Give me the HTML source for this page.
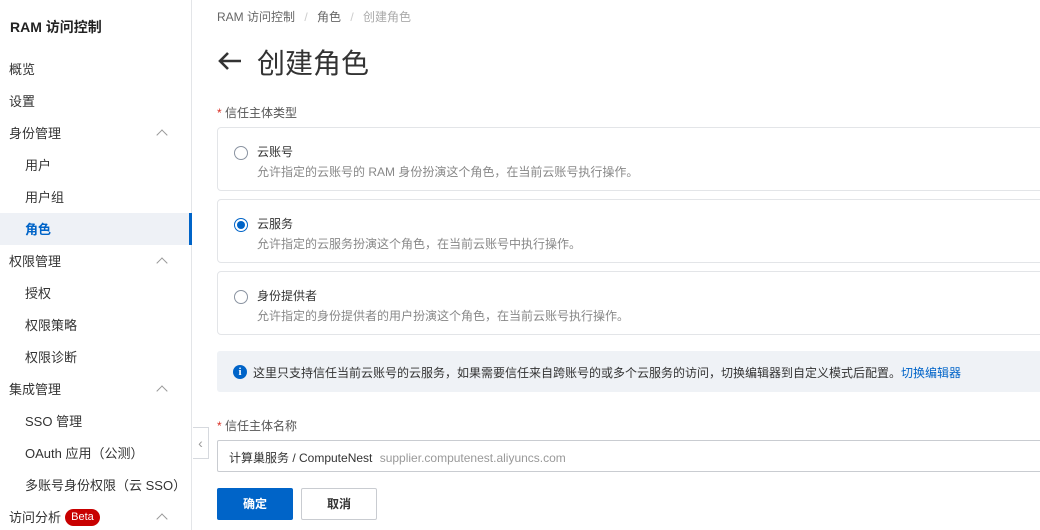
<!DOCTYPE html>
<html><head><meta charset="utf-8"><style>
*{margin:0;padding:0;box-sizing:border-box}
body{width:1040px;height:530px;overflow:hidden;background:#fff;font-family:"Liberation Sans","Noto Sans CJK SC",sans-serif;color:#333;position:relative}
.side{position:absolute;left:0;top:0;width:192px;height:530px;border-right:1px solid #e3e5e8}
.abs{position:absolute;white-space:nowrap}
.t{font-size:13px;color:#333}
.title{font-size:14px;font-weight:bold;color:#222}
.chev{position:absolute;left:158px;width:8px;height:8px;border-left:1.3px solid #999;border-top:1.3px solid #999;transform:rotate(45deg)}
.card{position:absolute;left:217px;width:840px;height:64px;border:1px solid #e3e5e8;border-radius:4px}
.radio{position:absolute;left:16px;top:18px;width:14px;height:14px;border:1px solid #8a93a1;border-radius:50%}
.card .h{position:absolute;left:39px;top:15px;font-size:12px;color:#333}
.card .d{position:absolute;left:39px;top:35px;font-size:12px;color:#888}
</style></head><body>
<div class="side">
<div class="abs title" style="left:10px;top:17px">RAM 访问控制</div>
<div class="abs t" style="left:9px;top:59px">概览</div>
<div class="abs t" style="left:9px;top:91px">设置</div>
<div class="abs t" style="left:9px;top:123px">身份管理</div><div class="chev" style="top:131px"></div>
<div class="abs t" style="left:25px;top:155px">用户</div>
<div class="abs t" style="left:25px;top:187px">用户组</div>
<div class="abs" style="left:0;top:213px;width:192px;height:32px;background:#eef1f6;border-right:3px solid #0064c8"></div>
<div class="abs t" style="left:25px;top:219px;color:#0064c8;font-weight:bold">角色</div>
<div class="abs t" style="left:9px;top:251px">权限管理</div><div class="chev" style="top:259px"></div>
<div class="abs t" style="left:25px;top:283px">授权</div>
<div class="abs t" style="left:25px;top:315px">权限策略</div>
<div class="abs t" style="left:25px;top:347px">权限诊断</div>
<div class="abs t" style="left:9px;top:379px">集成管理</div><div class="chev" style="top:387px"></div>
<div class="abs t" style="left:25px;top:411px">SSO 管理</div>
<div class="abs t" style="left:25px;top:443px">OAuth 应用（公测）</div>
<div class="abs t" style="left:25px;top:475px">多账号身份权限（云 SSO）</div>
<div class="abs t" style="left:9px;top:507px">访问分析</div>
<div class="abs" style="left:65px;top:509px;width:35px;height:17px;background:#c80000;border-radius:9px;color:#fff;font-size:11px;text-align:center;line-height:17px">Beta</div>
<div class="chev" style="top:515px"></div>
</div>
<div class="abs" style="left:193px;top:427px;width:16px;height:32px;border:1px solid #d6d9de;border-left:none;background:#fff;color:#999;font-size:14px;text-align:center;line-height:30px">‹</div>
<div class="abs" style="left:217px;top:8px;font-size:12px;color:#666">RAM 访问控制 <span style="color:#ccc;margin:0 6px">/</span> 角色 <span style="color:#ccc;margin:0 6px">/</span> <span style="color:#aaa">创建角色</span></div>
<svg class="abs" style="left:217px;top:50px" width="26" height="22" viewBox="0 0 26 22"><path d="M24 11H3M11 3L3 11L11 19" stroke="#333" stroke-width="2.6" fill="none"/></svg>
<div class="abs" style="left:257px;top:42px;font-size:28px;color:#333">创建角色</div>
<div class="abs" style="left:217px;top:104px;font-size:12px;color:#555"><span style="color:#d93026">*</span> 信任主体类型</div>
<div class="card" style="top:127px"><div class="radio"></div><div class="h">云账号</div><div class="d">允许指定的云账号的 RAM 身份扮演这个角色，在当前云账号执行操作。</div></div>
<div class="card" style="top:199px"><div class="radio" style="border-color:#0064c8"><div style="margin:2px;width:8px;height:8px;border-radius:50%;background:#0064c8"></div></div><div class="h">云服务</div><div class="d">允许指定的云服务扮演这个角色，在当前云账号中执行操作。</div></div>
<div class="card" style="top:271px"><div class="radio"></div><div class="h">身份提供者</div><div class="d">允许指定的身份提供者的用户扮演这个角色，在当前云账号执行操作。</div></div>
<div class="abs" style="left:217px;top:351px;width:840px;height:41px;background:#eff2f6;border-radius:3px"></div>
<div class="abs" style="left:233px;top:365px;width:14px;height:14px;border-radius:50%;background:#0064c8;color:#fff;font-size:11px;font-weight:bold;text-align:center;line-height:14px;font-family:'Liberation Serif',serif">i</div>
<div class="abs" style="left:253px;top:364px;font-size:12px;color:#333">这里只支持信任当前云账号的云服务，如果需要信任来自跨账号的或多个云服务的访问，切换编辑器到自定义模式后配置。<span style="color:#0064c8">切换编辑器</span></div>
<div class="abs" style="left:217px;top:417px;font-size:12px;color:#555"><span style="color:#d93026">*</span> 信任主体名称</div>
<div class="abs" style="left:217px;top:440px;width:840px;height:32px;border:1px solid #c9ccd1;border-radius:2px"></div>
<div class="abs" style="left:229px;top:449px;font-size:12px;color:#333">计算巢服务 / ComputeNest <span style="color:#999;margin-left:4px">supplier.computenest.aliyuncs.com</span></div>
<div class="abs" style="left:217px;top:488px;width:76px;height:32px;background:#0064c8;border-radius:2px;color:#fff;font-size:12px;font-weight:bold;text-align:center;line-height:32px">确定</div>
<div class="abs" style="left:301px;top:488px;width:76px;height:32px;border:1px solid #c9ccd1;border-radius:2px;color:#333;font-size:12px;font-weight:bold;text-align:center;line-height:30px">取消</div>
</body></html>
